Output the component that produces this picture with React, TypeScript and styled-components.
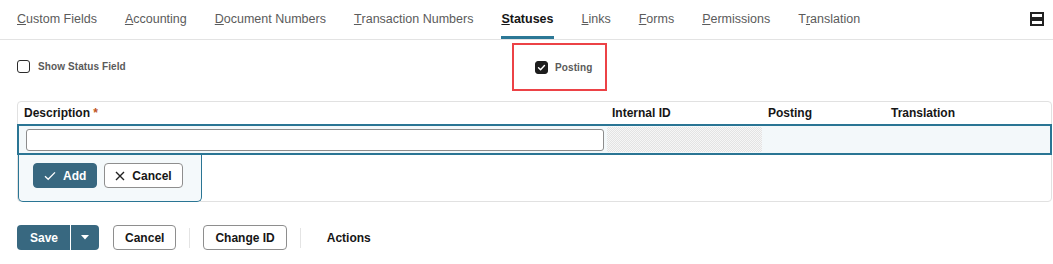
import React from 'react';
import styled, { createGlobalStyle } from "styled-components";

const GlobalStyle = createGlobalStyle`
  body {
    margin: 0;
    background: #fff;
    font-family: "Liberation Sans", Arial, sans-serif;
  }
`

const tabs = [
    {label: "Custom Fields", key: 0},
    {label: "Accounting", key: 0},
    {label: "Document Numbers", key: 0},
    {label: "Transaction Numbers", key: 0},
    {label: "Statuses", key: 0, active: true},
    {label: "Links", key: 0},
    {label: "Forms", key: 0},
    {label: "Permissions", key: 0},
    {label: "Translation", key: 1},
];

type TabProps = {
    label: string;
    keyIndex: number;
    active?: boolean;
}

const TabItem = (props: TabProps) => {
    const before = props.label.slice(0, props.keyIndex);
    const key = props.label.charAt(props.keyIndex);
    const after = props.label.slice(props.keyIndex + 1);
    return (
        <Tab $active={props.active}>
            {before}<u>{key}</u>{after}
        </Tab>
    );
};

const CheckIcon = () => (
    <svg width="13" height="13" viewBox="0 0 13 13">
        <path d="M3 6.8 L5.4 9.1 L10 4.2" fill="none" stroke="#fff" strokeWidth="1.7" strokeLinecap="round" strokeLinejoin="round"/>
    </svg>
);

export default function App() {
    return (
        <>
            <GlobalStyle/>
            <TabBar>
                <TabList>
                    {tabs.map((t) => (
                        <TabItem key={t.label} label={t.label} keyIndex={t.key} active={t.active}/>
                    ))}
                </TabList>
                <MenuIcon width="14" height="14" viewBox="0 0 14 14">
                    <rect x="1" y="1" width="12" height="5" fill="none" stroke="#222" strokeWidth="2"/>
                    <rect x="1" y="8" width="12" height="5" fill="none" stroke="#222" strokeWidth="2"/>
                </MenuIcon>
            </TabBar>

            <CheckRow>
                <Field>
                    <Box/>
                    <FieldLabel>Show Status Field</FieldLabel>
                </Field>
                <Highlight>
                    <Box $checked><CheckIcon/></Box>
                    <FieldLabel>Posting</FieldLabel>
                </Highlight>
            </CheckRow>

            <Table>
                <HeaderRow>
                    <HeadCell>Description <Req>*</Req></HeadCell>
                    <HeadCell>Internal ID</HeadCell>
                    <HeadCell>Posting</HeadCell>
                    <HeadCell>Translation</HeadCell>
                </HeaderRow>
                <EditRow>
                    <EditCell><TextInput/></EditCell>
                    <EditCell><Locked/></EditCell>
                    <EditCell/>
                    <EditCell/>
                </EditRow>
                <RowActions>
                    <Button $primary>
                        <svg width="12" height="10" viewBox="0 0 12 10">
                            <path d="M1 5.2 L4.2 8.3 L11 1.4" fill="none" stroke="#fff" strokeWidth="1.3"/>
                        </svg>
                        Add
                    </Button>
                    <Button>
                        <svg width="10" height="10" viewBox="0 0 10 10">
                            <path d="M1 1 L9 9 M9 1 L1 9" fill="none" stroke="#222" strokeWidth="1.4"/>
                        </svg>
                        Cancel
                    </Button>
                </RowActions>
            </Table>

            <Footer>
                <SplitButton>
                    <SplitMain>Save</SplitMain>
                    <SplitArrow>
                        <svg width="8" height="5" viewBox="0 0 8 5">
                            <path d="M0 0 L8 0 L4 4.5 Z" fill="#fff"/>
                        </svg>
                    </SplitArrow>
                </SplitButton>
                <Button $wide>Cancel</Button>
                <Divider/>
                <Button $wide>Change ID</Button>
                <Divider/>
                <TextButton>Actions</TextButton>
            </Footer>
        </>
    );
}

const TabBar = styled.div`
  display: flex;
  align-items: center;
  justify-content: space-between;
  height: 39px;
  border-bottom: 1px solid #e3e3e3;
  padding: 0 9px 0 17px;
`

const TabList = styled.div`
  display: flex;
  gap: 28px;
  height: 100%;
`

const Tab = styled.div<{ $active?: boolean }>`
  display: flex;
  align-items: center;
  height: 100%;
  box-sizing: border-box;
  padding-top: 1px;
  font-size: 12.5px;
  color: ${p => p.$active ? "#161616" : "#5b5b5b"};
  font-weight: ${p => p.$active ? 700 : 400};
  border-bottom: 3px solid ${p => p.$active ? "#2c7896" : "transparent"};
  margin-bottom: -1px;
  white-space: nowrap;
`

const MenuIcon = styled.svg`
  display: block;
  margin-bottom: 2px;
`

const CheckRow = styled.div`
  display: grid;
  grid-template-columns: 495px auto;
  align-items: center;
  padding: 2px 0 0 17px;
  height: 49px;
`

const Field = styled.label`
  display: flex;
  align-items: center;
  gap: 8px;
`

const Highlight = styled(Field)`
  box-sizing: border-box;
  width: 95px;
  height: 48px;
  border: 2px solid #ec4246;
  padding: 1px 0 0 21px;
  gap: 7px;
`

const Box = styled.span<{ $checked?: boolean }>`
  display: inline-flex;
  align-items: center;
  justify-content: center;
  box-sizing: border-box;
  width: 13px;
  height: 13px;
  border-radius: 3px;
  border: 1.5px solid ${p => p.$checked ? "#1d1d1d" : "#2b2b2b"};
  background: ${p => p.$checked ? "#1d1d1d" : "#fff"};
`

const FieldLabel = styled.span`
  font-size: 10px;
  font-weight: 700;
  color: #5a5a5a;
  letter-spacing: 0.1px;
`

const Table = styled.div`
  margin: 10px 1px 0 17px;
  border: 1px solid #e1e1e1;
  border-radius: 4px;
  height: 101px;
  box-sizing: border-box;
`

const columns = "588px 156px 123px 1fr";

const HeaderRow = styled.div`
  display: grid;
  grid-template-columns: ${columns};
  height: 21px;
  padding-bottom: 1px;
  align-items: center;
`

const HeadCell = styled.div`
  padding-left: 6px;
  font-size: 12px;
  font-weight: 700;
  color: #161616;
`

const Req = styled.span`
  color: #c0541d;
`

const EditRow = styled.div`
  display: grid;
  grid-template-columns: ${columns};
  margin: 0 -1px;
  height: 31px;
  box-sizing: border-box;
  border: 2px solid #2a7594;
  background: #f3f8fa;
  align-items: center;
`

const EditCell = styled.div`
  height: 100%;
  display: flex;
  align-items: center;
  padding: 0 3px 0 7px;
  box-sizing: border-box;
  &:nth-child(2) {
    padding: 1px 1px 1px 0;
  }
`

const TextInput = styled.input`
  width: 100%;
  height: 22px;
  box-sizing: border-box;
  border: 1px solid #8c8c8c;
  border-radius: 3px;
  background: #fff;
`

const Locked = styled.div`
  width: 100%;
  height: 100%;
  background: repeating-conic-gradient(#e3e3e3 0 25%, #f6f6f6 0 50%) 0 0 / 2px 2px;
`

const RowActions = styled.div`
  display: flex;
  gap: 7px;
  width: 184px;
  box-sizing: border-box;
  padding: 8px 0 0 14px;
  height: 47px;
  border: 1.5px solid #2a7594;
  border-top: none;
  border-radius: 0 0 5px 5px;
  background: #f4f9fb;
`

const Button = styled.button<{ $primary?: boolean; $wide?: boolean }>`
  display: inline-flex;
  align-items: center;
  justify-content: center;
  gap: 7px;
  height: 25px;
  box-sizing: border-box;
  padding: ${p => p.$wide ? "0 11px" : "0 10px"};
  border-radius: 4px;
  border: 1px solid ${p => p.$primary ? "#386880" : "#8e8e8e"};
  background: ${p => p.$primary ? "#386880" : "#fff"};
  color: ${p => p.$primary ? "#fff" : "#161616"};
  font-family: "Liberation Sans", Arial, sans-serif;
  font-size: 12px;
  font-weight: 700;
  cursor: pointer;
`

const Footer = styled.div`
  display: flex;
  align-items: center;
  gap: 13px;
  margin-top: 23px;
  padding-left: 17px;
`

const SplitButton = styled.div`
  display: flex;
  height: 25px;
  margin-right: 1px;
  border-radius: 4px;
  overflow: hidden;
  background: #386880;
`

const SplitMain = styled.div`
  display: flex;
  align-items: center;
  padding: 0 12px 0 13px;
  color: #fff;
  font-size: 12px;
  font-weight: 700;
  border-right: 1px solid #fff;
`

const SplitArrow = styled.div`
  display: flex;
  align-items: center;
  justify-content: center;
  width: 28px;
`

const Divider = styled.div`
  width: 1px;
  height: 20px;
  background: #e4e4e4;
`

const TextButton = styled.div`
  padding-left: 13px;
  font-size: 12px;
  font-weight: 700;
  color: #161616;
`
